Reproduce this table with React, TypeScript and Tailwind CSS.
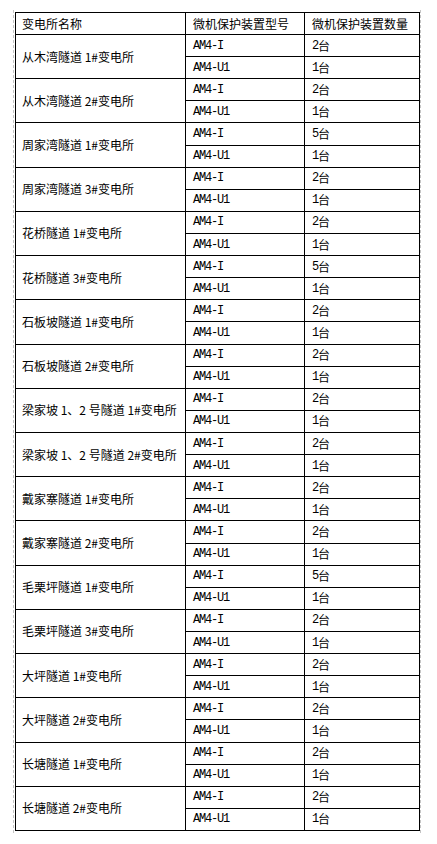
interface Station {
	name: string;
	counts: [number, number];
}

const STATIONS: Station[] = [
	{ name: "从木湾隧道 1#变电所", counts: [2, 1] },
	{ name: "从木湾隧道 2#变电所", counts: [2, 1] },
	{ name: "周家湾隧道 1#变电所", counts: [5, 1] },
	{ name: "周家湾隧道 3#变电所", counts: [2, 1] },
	{ name: "花桥隧道 1#变电所", counts: [2, 1] },
	{ name: "花桥隧道 3#变电所", counts: [5, 1] },
	{ name: "石板坡隧道 1#变电所", counts: [2, 1] },
	{ name: "石板坡隧道 2#变电所", counts: [2, 1] },
	{ name: "梁家坡 1、2 号隧道 1#变电所", counts: [2, 1] },
	{ name: "梁家坡 1、2 号隧道 2#变电所", counts: [2, 1] },
	{ name: "戴家寨隧道 1#变电所", counts: [2, 1] },
	{ name: "戴家寨隧道 2#变电所", counts: [2, 1] },
	{ name: "毛栗坪隧道 1#变电所", counts: [5, 1] },
	{ name: "毛栗坪隧道 3#变电所", counts: [2, 1] },
	{ name: "大坪隧道 1#变电所", counts: [2, 1] },
	{ name: "大坪隧道 2#变电所", counts: [2, 1] },
	{ name: "长塘隧道 1#变电所", counts: [2, 1] },
	{ name: "长塘隧道 2#变电所", counts: [2, 1] },
];

const MODELS = ["AM4-I", "AM4-U1"];

const cjk = "font-['Noto_Sans_CJK_SC',sans-serif] text-[12px] leading-none";
const mono = "font-['Liberation_Mono',monospace] text-[12px] tracking-[-1.2px] leading-none";

function ModelRow({ model, count, last }: { model: string; count: number; last?: boolean }) {
	return (
		<div className={last ? "flex h-[21.11px]" : "flex h-[22.11px] border-b border-black"}>
			<div className={`flex w-[119px] items-center border-r border-black pl-[7px] ${mono}`}>
				{model}
			</div>
			<div className="flex flex-1 items-center pl-[7px]">
				<span className={mono}>{count}</span>
				<span className={cjk}>台</span>
			</div>
		</div>
	);
}

export default function App() {
	return (
		<div className="min-h-[844px] bg-white pt-[10px] text-black">
			{/* dashed page margins */}
			<div className="ml-[13px] w-[408px] border-x border-dashed border-[#c4c4c4] py-[2px]">
				<div className="ml-[1px] w-[405px] border-x border-t border-black">
					{/* Header */}
					<div className="flex h-[22px] border-b border-black">
						<div className={`flex w-[170px] items-center border-r border-black pl-[6px] ${cjk}`}>
							变电所名称
						</div>
						<div className={`flex w-[119px] items-center border-r border-black pl-[7px] ${cjk}`}>
							微机保护装置型号
						</div>
						<div className={`flex flex-1 items-center pl-[7px] ${cjk}`}>
							微机保护装置数量
						</div>
					</div>

					{STATIONS.map((s) => (
						<div key={s.name} className="flex border-b border-black">
							<div className={`flex w-[170px] items-center border-r border-black pl-[6px] ${cjk}`}>
								{s.name}
							</div>
							<div className="flex flex-1 flex-col">
								<ModelRow model={MODELS[0]} count={s.counts[0]} />
								<ModelRow model={MODELS[1]} count={s.counts[1]} last />
							</div>
						</div>
					))}
				</div>
			</div>
		</div>
	);
}
